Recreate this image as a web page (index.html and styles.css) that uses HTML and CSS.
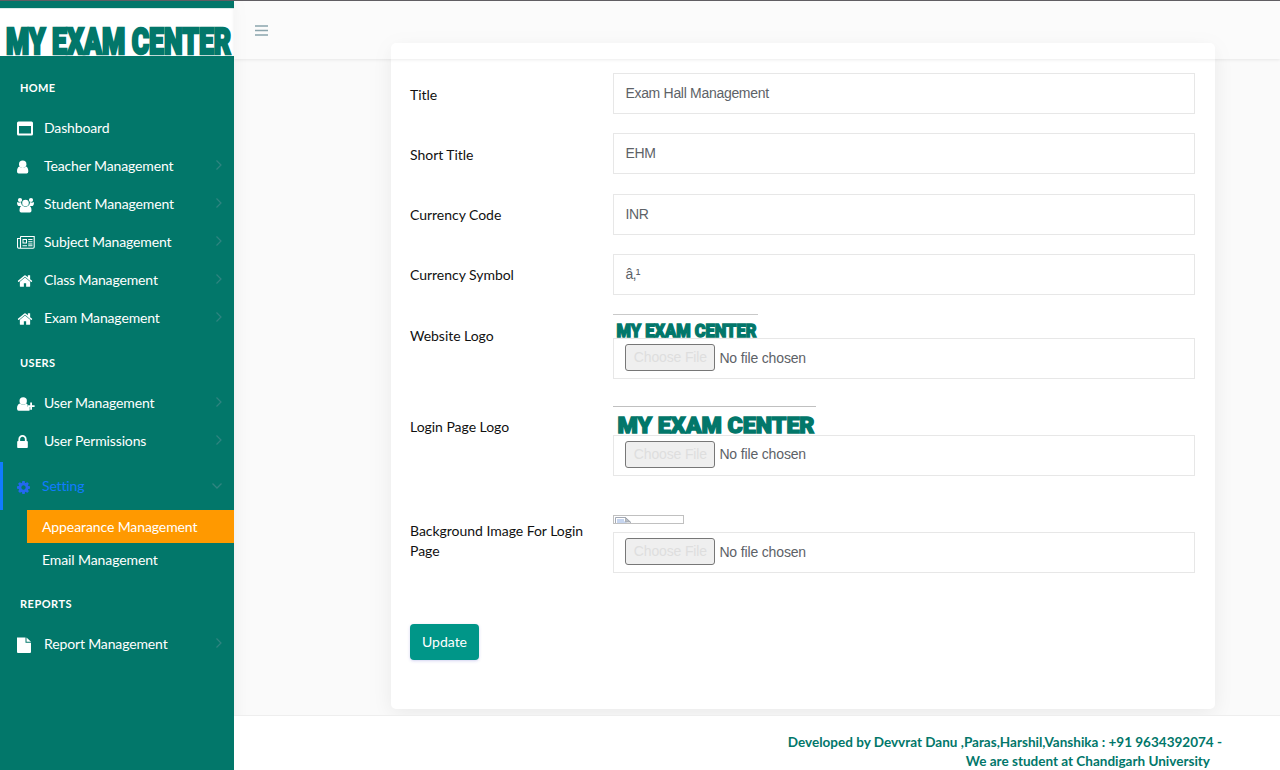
FILE: index.html
```html
<!DOCTYPE html>
<html lang="en">
<head>
<meta charset="utf-8">
<title>My Exam Center</title>
<link rel="stylesheet" href="styles.css">
</head>
<body>
<svg class="defs" width="0" height="0">
  <symbol id="home" viewBox="0 0 1792 1792"><path d="M1472 992v480q0 26-19 45t-45 19h-384v-384h-256v384h-384q-26 0-45-19t-19-45v-480q0-1 .5-3t.5-3l575-474 575 474q1 2 1 6zm223-69l-62 74q-8 9-21 11h-3q-13 0-21-7l-692-577-692 577q-12 8-24 7-13-2-21-11l-62-74q-8-10-7-23.5t11-21.5l719-599q32-26 76-26t76 26l244 204v-195q0-14 9-23t23-9h192q14 0 23 9t9 23v408l219 182q10 8 11 21.5t-7 23.5z"/></symbol>
  <symbol id="right" viewBox="0 0 8 12"><path d="M1.500 1.500 6 6 1.500 10.500" fill="none" stroke="currentColor" stroke-width="1.200"/></symbol>
  <symbol id="broken" viewBox="0 0 16 6"><path d="M.5 6V.5h10L15.500 5.500V6" fill="#fff" stroke="#a3a9b5"/><path d="M2 6V2h7v2l3 2z" fill="#c6d5ef"/><path d="M10.500.5V5h5z" fill="#b9bec6" stroke="#8e959d" stroke-width=".6"/></symbol>
</svg>
<div class="page">
  <aside class="sidebar">
    <div class="brand"><svg width="234" height="47"><text class="logo-text big" transform="translate(6 44.500) scale(1 1.460)" textLength="225" lengthAdjust="spacingAndGlyphs" font-size="25">MY EXAM CENTER</text></svg></div>
    <h2 class="group">HOME</h2>
    <a class="item"><svg class="ico" viewBox="0 0 18 16"><path fill-rule="evenodd" d="M1.500 1.500h13q1.500 0 1.500 1.500v11q0 1.500-1.500 1.500h-13Q0 15.500 0 14V3q0-1.500 1.500-1.500zM2 6v7.500h12V6z"/></svg><span>Dashboard</span></a>
    <a class="item"><svg class="ico low" viewBox="0 0 18 16"><circle cx="5.700" cy="5.200" r="3.700"/><path d="M2.500 7.500Q5.700 10.700 9 7.500q2.300.8 2.300 5 0 2-1.700 2H1.700Q0 14.500 0 12.500q0-4.200 2.500-5z"/></svg><span>Teacher Management</span><svg class="arr"><use href="#right"/></svg></a>
    <a class="item"><svg class="ico low" viewBox="0 0 18 16"><circle cx="3" cy="3" r="2.100"/><circle cx="14" cy="3" r="2.100"/><path d="M0 5q2 1 4 0 0 2 1.500 4H1.500Q0 8.500 0 5zM17 5q-2 1-4 0 0 2-1.500 4h4Q17 8.500 17 5z"/><circle cx="8.500" cy="6" r="3.300"/><path d="M5.500 8.500q3 2.400 6 0 3 .5 3 5 0 2-1.700 2H4.200q-1.700 0-1.700-2 0-4.500 3-5z"/></svg><span>Student Management</span><svg class="arr"><use href="#right"/></svg></a>
    <a class="item"><svg class="ico" viewBox="0 0 18 16"><path d="M3.500 2.500h13.700V13q0 1.200-1.200 1.200H1.700Q.5 14 .5 12.500V4.500h3M3.500 2.500V13q0 1-1 1.200" fill="none" stroke="currentColor" stroke-width="1.100"/><path fill-rule="evenodd" d="M5.500 5H10v4.500H5.500zm1 1v2.500H9V6zM11.200 5h4.300v1h-4.300zm0 2.200h4.300v1h-4.300zm0 2.200h4.300v1h-4.300zM5.500 11.300H10v1H5.500zm5.700 0h4.300v1h-4.300z"/></svg><span>Subject Management</span><svg class="arr"><use href="#right"/></svg></a>
    <a class="item"><svg class="ico house"><use href="#home"/></svg><span>Class Management</span><svg class="arr"><use href="#right"/></svg></a>
    <a class="item"><svg class="ico house"><use href="#home"/></svg><span>Exam Management</span><svg class="arr"><use href="#right"/></svg></a>
    <h2 class="group users">USERS</h2>
    <a class="item"><svg class="ico low" viewBox="0 0 18 16"><circle cx="6.200" cy="5" r="3.700"/><path d="M3 7.500q3.200 2.800 6.300 0l1.200.7v2.600h2.200v3.400q-.5.500-1.500.5H1.700Q0 14.700 0 12.500q0-4.200 3-5z"/><path d="M13.200 6.500h1.800v2.700h2.600V11H15v2.700h-1.800V11h-2.600V9.200h2.600z"/></svg><span>User Management</span><svg class="arr"><use href="#right"/></svg></a>
    <a class="item"><svg class="ico lock" viewBox="320 128 1152 1408"><path d="M640 768h512v-192q0-106-75-181t-181-75-181 75-75 181v192zm832 96v576q0 40-28 68t-68 28h-960q-40 0-68-28t-28-68v-576q0-40 28-68t68-28h32v-192q0-184 132-316t316-132 316 132 132 316v192h32q40 0 68 28t28 68z"/></svg><span>User Permissions</span><svg class="arr"><use href="#right"/></svg></a>
    <a class="item open"><svg class="ico cog" viewBox="128 128 1536 1536"><path d="M1152 896q0-106-75-181t-181-75-181 75-75 181 75 181 181 75 181-75 75-181zm512-109v222q0 12-8 23t-20 13l-185 28q-19 54-39 91 35 50 107 138 10 12 10 25t-9 23q-27 37-99 108t-94 71q-12 0-26-9l-138-108q-44 23-91 38-16 136-29 186-7 28-36 28h-222q-14 0-24.500-8.500t-11.500-21.500l-28-184q-49-16-90-37l-141 107q-10 9-25 9-14 0-25-11-126-114-165-168-7-10-7-23 0-12 8-23 15-21 51-66.500t54-70.500q-27-50-41-99l-183-27q-13-2-21-12.500t-8-23.500v-222q0-12 8-23t19-13l186-28q14-46 39-92-40-57-107-138-10-12-10-24 0-10 9-23 26-36 98.500-107.500t94.500-71.500q13 0 26 10l138 107q44-23 91-38 16-136 29-186 7-28 36-28h222q14 0 24.500 8.500t11.500 21.500l28 184q49 16 90 37l142-107q9-9 24-9 13 0 25 10 129 119 165 170 7 8 7 22 0 12-8 23-15 21-51 66.500t-54 70.500q26 50 41 98l183 28q13 2 21 12.500t8 23.500z"/></svg><span>Setting</span><svg class="arr down" viewBox="0 0 12 8"><path d="M1.500 1.500 6 6l4.500-4.500" fill="none" stroke="currentColor" stroke-width="1.300"/></svg></a>
    <a class="sub active"><span>Appearance Management</span></a>
    <a class="sub"><span>Email Management</span></a>
    <h2 class="group reports">REPORTS</h2>
    <a class="item"><svg class="ico low" viewBox="0 0 18 16"><path d="M0 .5h8.500v5.200H14V15q0 1-1 1H1q-1 0-1-1zM9.500.5 14 4.700H9.500z"/></svg><span>Report Management</span><svg class="arr"><use href="#right"/></svg></a>
  </aside>
  <main class="main">
    <header class="topbar"><svg width="13" height="11" viewBox="0 0 13 11"><path d="M0 1h13M0 5.500h13M0 10h13" stroke="#8ba5ad" stroke-width="1.500"/></svg></header>
    <section class="card">
      <div class="row"><label>Title</label><div class="field">Exam Hall Management</div></div>
      <div class="row"><label>Short Title</label><div class="field">EHM</div></div>
      <div class="row"><label>Currency Code</label><div class="field">INR</div></div>
      <div class="row"><label>Currency Symbol</label><div class="field">â‚¹</div></div>
      <div class="row site"><label>Website Logo</label><div><svg class="pic" width="145" height="24"><path d="M0 .5h145" stroke="#c9c9c9"/><text class="logo-text" transform="translate(3.500 22.500)" textLength="140" lengthAdjust="spacingAndGlyphs" font-size="18">MY EXAM CENTER</text></svg><div class="field file"><span class="choose">Choose File</span>No file chosen</div></div></div>
      <div class="row login"><label>Login Page Logo</label><div><svg class="pic" width="203" height="29"><path d="M0 .5h203" stroke="#c0c0c0"/><text class="logo-text" transform="translate(4.500 27)" textLength="197" lengthAdjust="spacingAndGlyphs" font-size="21.500">MY EXAM CENTER</text></svg><div class="field file"><span class="choose">Choose File</span>No file chosen</div></div></div>
      <div class="row back"><label>Background Image For Login Page</label><div><div class="missing"><svg width="16" height="6"><use href="#broken"/></svg></div><div class="field file"><span class="choose">Choose File</span>No file chosen</div></div></div>
      <button class="update">Update</button>
    </section>
    <footer class="footer"><p>Developed by Devvrat Danu ,Paras,Harshil,Vanshika : +91 9634392074 -</p><p class="second">We are student at Chandigarh University</p></footer>
  </main>
</div>
</body>
</html>
```
FILE: styles.css
```css
* { box-sizing: border-box; }
body { margin: 0; overflow: hidden; background: #fafafa; font-family: Lato, sans-serif; font-size: 14px; color: #212529; }
.defs { position: absolute; }
.page { display: flex; height: 770px; border-top: 1px solid #626065; }
.sidebar { width: 234px; flex: none; background: #02776a; color: #fff; padding-top: 7px; box-shadow: 0 0 15px rgba(0,0,0,.06); }
.brand { height: 48px; background: #fff; border-top: 1px solid #dceae8; }
.brand svg { display: block; overflow: visible; }
.logo-text { font-family: Roboto, sans-serif; font-weight: 900; fill: #02776a; stroke: #02776a; stroke-width: 1.3px; }
.logo-text.big { stroke-width: 1.7px; }
.group { margin: 0; height: 53px; padding: 23px 20px 0; font-size: 11px; line-height: 18px; font-weight: 700; letter-spacing: .35px; }
.group.users { height: 47px; padding-top: 17px; }
.group.reports { height: 49px; padding-top: 19px; letter-spacing: .5px; }
.item { display: flex; align-items: center; height: 38px; padding: 0 11px 0 17px; }
.item span { flex: 1; letter-spacing: -.14px; margin-top: -1px; }
.ico { width: 18px; height: 16px; margin-right: 9px; fill: currentColor; color: #fff; flex: none; }
.ico.low { margin-top: 1px; }
.ico.house { width: 16px; height: 16px; margin-right: 11px; margin-top: 2px; }
.ico.lock { width: 11px; height: 13px; margin-right: 16px; margin-top: 1px; }
.arr { width: 8px; height: 12px; color: #2f8580; margin-top: -2px; }
.open { height: 48px; margin-top: 2px; border-left: 3px solid #117bff; padding-left: 14px; color: #117bff; }
.open .ico { width: 13px; height: 13px; color: #2468ef; margin: 3px 12px 0 0; }
.arr.down { width: 12px; height: 8px; margin-top: 0; }
.sub { display: flex; align-items: center; height: 33px; margin-left: 27px; padding-left: 15px; letter-spacing: -.1px; }
.sub.active { background: #ff9900; }
.main { position: relative; flex: 1; display: flex; flex-direction: column; }
.topbar { position: absolute; inset: 0 0 auto 0; z-index: 2; height: 58px; padding: 23.5px 21px; background: rgba(255,255,255,.25); box-shadow: 0 1px 3px rgba(0,0,0,.08); }
.topbar svg { display: block; }
.card { width: 824px; height: 666px; margin: 42px 0 0 156.5px; padding: 30px 19.5px; background: #fff; border-radius: 5px; box-shadow: 0 4px 20px rgba(0,0,0,.07); }
.row { display: grid; grid-template-columns: 203.4px 581.6px; height: 60.3px; align-items: start; }
.row label { padding-top: 11.5px; line-height: 19.5px; letter-spacing: -.03px; color: #111; width: 185px; }
.field { height: 41px; border: 1px solid #e7e7e7; display: flex; align-items: center; padding: 0 11px 1px; font: 14px "Liberation Sans", sans-serif; letter-spacing: -.3px; color: #5d6267; }
.field.file { letter-spacing: -.15px; padding-bottom: 2px; }
.pic { display: block; overflow: visible; }
.row.site { height: 91.5px; }
.row.login { height: 109.5px; }
.row.back { height: 108.5px; }
.row.back label { padding-top: 6px; }
.choose { width: 90px; height: 27px; margin-right: 4px; border: 1px solid #777; border-radius: 3px; background: #efefef; color: #dedede; line-height: 25px; text-align: center; }
.missing { width: 71px; height: 9px; border: 1px solid #c0c0c0; margin-bottom: 8px; padding: 1px; }
.missing svg { display: block; }
.update { display: block; width: 69px; height: 36px; padding: 0; border: 0; border-radius: 4px; background: #009688; color: #fff; font: 14px Lato, sans-serif; box-shadow: 0 1px 3px rgba(80,80,200,.25); }
.footer { position: relative; height: 55px; margin-top: 6px; padding: 16.5px 58px 0 0; background: #fff; border-top: 1px solid #eee; text-align: right; font-size: 13.53px; font-weight: 700; line-height: 19.5px; color: #02776a; }
.footer p { margin: 0; }
.footer .second { padding-right: 12px; }
```
